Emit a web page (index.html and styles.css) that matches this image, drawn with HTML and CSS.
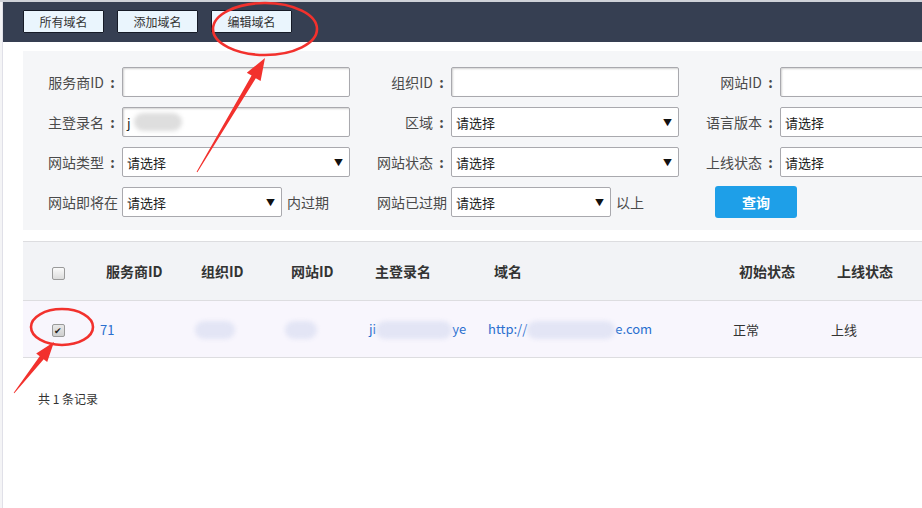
FILE: index.html
```html
<!DOCTYPE html>
<html lang="zh-CN">
<head>
<meta charset="utf-8">
<title>域名管理</title>
<link rel="stylesheet" href="styles.css">
</head>
<body>
<div class="page">
  <div class="leftbar"></div>
  <div class="main">
    <div class="topbar">
      <button class="tab">所有域名</button>
      <button class="tab">添加域名</button>
      <button class="tab">编辑域名</button>
    </div>
    <div class="content">
      <div class="search">
        <div class="row">
          <div class="group"><label class="lbl">服务商ID<span class="colon">:</span></label><div class="input"></div></div>
          <div class="group"><label class="lbl">组织ID<span class="colon">:</span></label><div class="input"></div></div>
          <div class="group"><label class="lbl">网站ID<span class="colon">:</span></label><div class="input"></div></div>
        </div>
        <div class="row">
          <div class="group"><label class="lbl">主登录名<span class="colon">:</span></label><div class="input"><span class="val">j</span><span class="blur blur-grey w48"></span></div></div>
          <div class="group"><label class="lbl">区域<span class="colon">:</span></label><div class="select"><span>请选择</span><span class="arrow">▼</span></div></div>
          <div class="group"><label class="lbl">语言版本<span class="colon">:</span></label><div class="select"><span>请选择</span></div></div>
        </div>
        <div class="row">
          <div class="group"><label class="lbl">网站类型<span class="colon">:</span></label><div class="select"><span>请选择</span><span class="arrow">▼</span></div></div>
          <div class="group"><label class="lbl">网站状态<span class="colon">:</span></label><div class="select"><span>请选择</span><span class="arrow">▼</span></div></div>
          <div class="group"><label class="lbl">上线状态<span class="colon">:</span></label><div class="select"><span>请选择</span></div></div>
        </div>
        <div class="row">
          <div class="group"><label class="lbl">网站即将在</label><div class="select short"><span>请选择</span><span class="arrow">▼</span></div><span class="suffix">内过期</span></div>
          <div class="group"><label class="lbl">网站已过期</label><div class="select short"><span>请选择</span><span class="arrow">▼</span></div><span class="suffix">以上</span></div>
          <div class="group"><button class="query">查询</button></div>
        </div>
      </div>

      <table class="grid">
        <colgroup>
          <col class="c0"><col class="c1"><col class="c2"><col class="c3"><col class="c4"><col class="c5"><col class="c6"><col class="c7">
        </colgroup>
        <thead>
          <tr>
            <th class="chk"><span class="cb"></span></th>
            <th>服务商ID</th>
            <th>组织ID</th>
            <th>网站ID</th>
            <th>主登录名</th>
            <th>域名</th>
            <th>初始状态</th>
            <th>上线状态</th>
          </tr>
        </thead>
        <tbody>
          <tr>
            <td class="chk"><span class="cb checked">✔</span></td>
            <td class="link">71</td>
            <td><span class="blur w40"></span></td>
            <td><span class="blur w32"></span></td>
            <td class="link">ji<span class="blur w76"></span>ye</td>
            <td class="link">http://<span class="blur w88"></span>e.com</td>
            <td>正常</td>
            <td>上线</td>
          </tr>
        </tbody>
      </table>

      <div class="total">共 1 条记录</div>
    </div>
  </div>

  <svg class="marks" width="922" height="508" viewBox="0 0 922 508">
    <ellipse cx="265" cy="29" rx="52" ry="26" fill="none" stroke="#f2312d" stroke-width="2.6"/>
    <polygon fill="#f2312d" points="196.6,171.7 251.6,75.6 246.8,72.8 265,58 260.6,81.0 255.8,78.2 197.4,172.3"/>
    <ellipse cx="62" cy="327" rx="31" ry="18" fill="none" stroke="#f2312d" stroke-width="2.6"/>
    <polygon fill="#f2312d" points="13.7,392.7 39.7,356.2 36.2,353.4 54,342 47.2,362.0 43.7,359.2 14.3,393.3"/>
  </svg>
</div>
</body>
</html>
```

FILE: styles.css
```css
* { box-sizing: border-box; }

html, body {
  margin: 0;
  padding: 0;
  background: #ffffff;
}

body {
  font-family: "Noto Sans CJK SC", "Microsoft YaHei", "Noto Sans", sans-serif;
  color: #333;
  width: 922px;
  height: 508px;
  overflow: hidden;
}

.page {
  position: relative;
  display: flex;
  width: 922px;
  height: 508px;
  border-top: 2px solid #cfd2d8;
}

.leftbar {
  width: 3px;
  flex: none;
  background: #f4f4f6;
  border-right: 1px solid #e0e0e8;
}

.main {
  flex: 1;
  min-width: 0;
  overflow: hidden;
}

.topbar {
  height: 40px;
  background: #363f52;
  display: flex;
  align-items: flex-start;
  gap: 13px;
  padding: 8px 0 0 20px;
}

.tab {
  width: 81px;
  height: 23px;
  padding: 0;
  margin: 0;
  background: #eaf5fd;
  border: 1px solid #161b27;
  border-radius: 1px;
  font-family: inherit;
  font-size: 12px;
  color: #333;
  line-height: 21px;
}

.content {
  padding: 9px 0 0 20px;
}

.search {
  background: #f5f6f8;
  height: 179px;
  padding: 16px 0 0 24px;
  display: flex;
  flex-direction: column;
  gap: 10px;
  overflow: hidden;
}

.row {
  display: flex;
  gap: 26px;
  height: 30px;
  white-space: nowrap;
}

.group {
  width: 303px;
  flex: none;
  display: flex;
  align-items: center;
}

.lbl {
  width: 71px;
  flex: none;
  margin-right: 4px;
  text-align: right;
  font-size: 14px;
  color: #4a4a4a;
}

.colon {
  display: inline-block;
  width: 14px;
  padding-left: 3px;
  text-align: center;
  font-weight: bold;
}

.input, .select {
  width: 228px;
  height: 30px;
  flex: none;
  background: #fff;
  border: 1px solid #a9a9ae;
  border-radius: 2px;
  display: flex;
  align-items: center;
  padding: 0 4px;
  font-size: 13px;
  color: #222;
}

.input {
  box-shadow: inset 1px 1px 2px rgba(0, 0, 0, 0.18);
}

.select {
  justify-content: space-between;
  padding-right: 6px;
}

.select.short {
  width: 160px;
}

.arrow {
  font-size: 9px;
  color: #111;
}

.suffix {
  margin-left: 5px;
  font-size: 14px;
  color: #4a4a4a;
}

.query {
  margin-left: 10px;
  width: 82px;
  height: 32px;
  background: #1e9fe8;
  border: none;
  border-radius: 3px;
  color: #fff;
  font-family: inherit;
  font-size: 14px;
  font-weight: bold;
  padding: 0;
}

.blur {
  display: inline-block;
  height: 18px;
  background: #e3e5f5;
  border-radius: 9px;
  filter: blur(2px);
  vertical-align: middle;
}

.blur-grey {
  background: #dedede;
}

.w32 { width: 32px; }
.w40 { width: 40px; }
.w48 { width: 48px; margin-left: 3px; }
.w76 { width: 76px; }
.w88 { width: 88px; }

.val {
  color: #222;
}

.grid {
  margin-top: 11px;
  width: 899px;
  table-layout: fixed;
  border-collapse: collapse;
  white-space: nowrap;
}

.c0 { width: 70px; }
.c1 { width: 95px; }
.c2 { width: 90px; }
.c3 { width: 84px; }
.c4 { width: 119px; }
.c5 { width: 245px; }
.c6 { width: 98px; }
.c7 { width: 98px; }

.grid th {
  height: 59px;
  background: #f2f3f6;
  border-top: 1px solid #dddde0;
  border-bottom: 1px solid #dddde0;
  text-align: left;
  padding: 0 0 0 13px;
  font-size: 14px;
  font-weight: bold;
  color: #333;
}

.grid td {
  height: 57px;
  background: #f8f6fd;
  border-bottom: 1px solid #dddde0;
  padding: 0 0 0 7px;
  font-size: 13px;
  color: #333;
}

.grid .chk {
  text-align: center;
  padding: 0;
}

.grid td.link {
  color: #2a6fcf;
}

.cb {
  display: inline-block;
  width: 13px;
  height: 13px;
  border: 1px solid #9a9a9a;
  border-radius: 2px;
  background: linear-gradient(#fafafa, #dcdcdc);
  vertical-align: middle;
  font-size: 9px;
  line-height: 11px;
  text-align: center;
  color: #222;
}

.cb.checked {
  background: linear-gradient(#e8e8e8, #cfcfcf);
}

.total {
  margin-top: 32px;
  padding-left: 15px;
  font-size: 12px;
  color: #333;
}

.marks {
  position: absolute;
  left: 0;
  top: -2px;
  pointer-events: none;
}
```
